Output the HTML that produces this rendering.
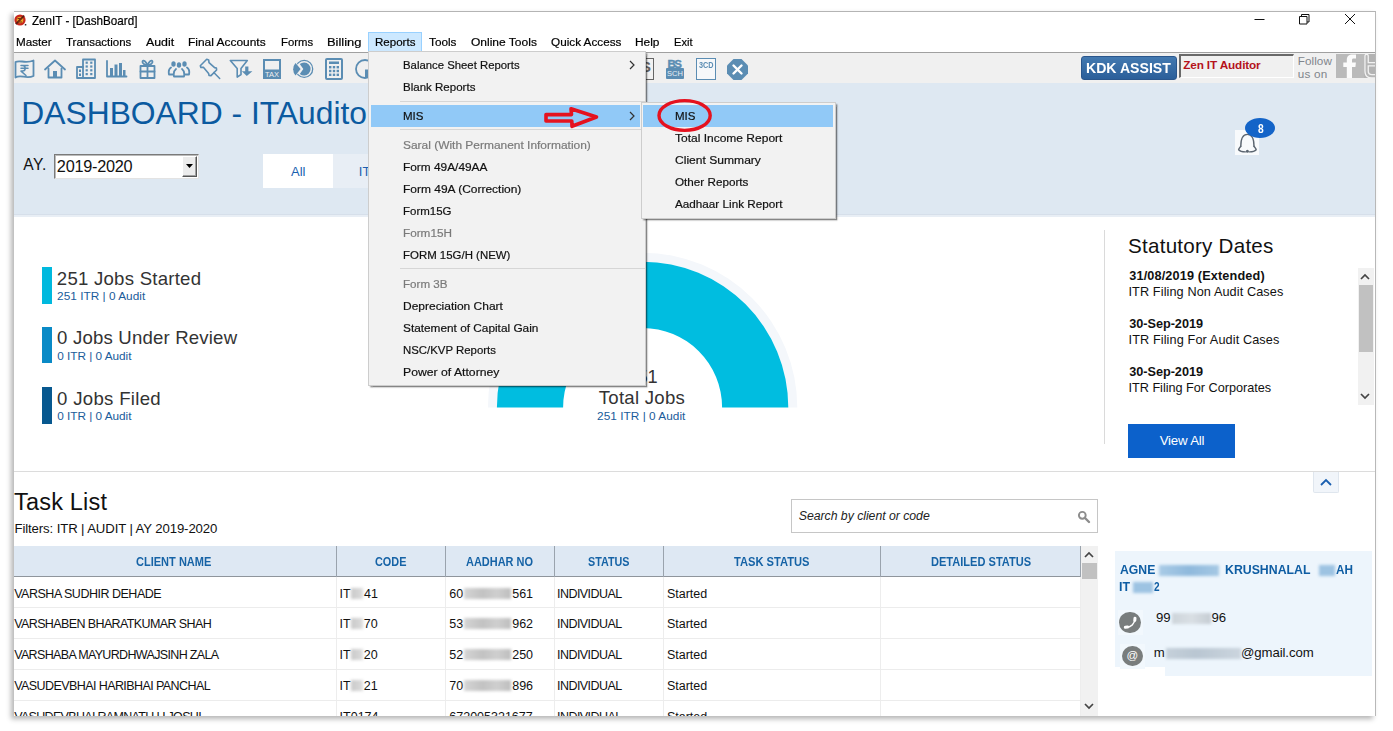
<!DOCTYPE html>
<html><head><meta charset="utf-8"><title>ZenIT - [DashBoard]</title>
<style>
*{box-sizing:border-box;margin:0;padding:0}
html,body{width:1393px;height:731px;overflow:hidden;background:#fff}
body{font-family:"Liberation Sans",Arial,sans-serif;color:#111;position:relative}
.a{position:absolute}
#win{position:absolute;left:13.6px;top:11px;width:1362.4px;height:705px;background:#fff;box-shadow:-3px 3px 5px rgba(0,0,0,.29);overflow:hidden}
#win:after{content:'';position:absolute;left:0;top:0;right:0;bottom:0;border-top:1px solid #b4b4b4;border-right:1px solid #b8b8b8;pointer-events:none}
#in{position:absolute;left:-13.6px;top:-11px;width:1393px;height:731px}
.t{position:absolute;white-space:nowrap;line-height:1}
.dd{position:absolute;background:#f2f2f2;border:1px solid #cdcdcd;box-shadow:1.500px 1.500px 1.500px rgba(0,0,0,.48)}
.blur{filter:blur(2px)}
</style></head><body>
<div id="win"><div id="in">
<div class="t" style="left:31.87px;top:15px;font-size:12.6px;color:#000;transform:scaleX(0.9260);transform-origin:0 0;-webkit-text-stroke:.2px;">ZenIT - [DashBoard]</div>
<svg class="a" style="left:14px;top:13px" width="13" height="14" viewBox="0 0 13 14" ><circle cx="6" cy="7" r="5.6" fill="#c8281c"/><circle cx="6" cy="7" r="3.3" fill="#e9a325"/><path d="M1.8 11.2 L10.2 2.600" stroke="#5a1a10" stroke-width="1.700"/><path d="M3.500 5.500h4l-3.500 3.500h4" stroke="#7a2a10" stroke-width="1" fill="none"/><rect x="10.800" y="11" width="1.500" height="1.500" fill="#333"/></svg>
<svg class="a" style="left:1250px;top:12px" width="115" height="16" viewBox="0 0 115 16" ><g stroke="#111" stroke-width="1" fill="none"><path d="M4.500 7.500h10"/><path d="M49.500 4.500h7.500v7.500h-7.500zM51.500 4.500v-2h7.500v7.500h-2"/><path d="M95 2l10 10M105 2l-10 10"/></g></svg>
<div class="a" style="left:368px;top:32px;width:54px;height:20.5px;background:#cce8ff;border:1px solid #99d1ff"></div>
<div class="t" style="left:15.55px;top:36px;font-size:11.7px;color:#000;transform:scaleX(0.9983);transform-origin:0 0;-webkit-text-stroke:.2px;">Master</div>
<div class="t" style="left:66.26px;top:36px;font-size:11.7px;color:#000;transform:scaleX(0.9828);transform-origin:0 0;-webkit-text-stroke:.2px;">Transactions</div>
<div class="t" style="left:146.4px;top:36px;font-size:11.7px;color:#000;transform:scaleX(1.0575);transform-origin:0 0;-webkit-text-stroke:.2px;">Audit</div>
<div class="t" style="left:188.34px;top:36px;font-size:11.7px;color:#000;transform:scaleX(1.0212);transform-origin:0 0;-webkit-text-stroke:.2px;">Final Accounts</div>
<div class="t" style="left:280.68px;top:36px;font-size:11.7px;color:#000;transform:scaleX(0.9684);transform-origin:0 0;-webkit-text-stroke:.2px;">Forms</div>
<div class="t" style="left:327.47px;top:36px;font-size:11.7px;color:#000;transform:scaleX(1.1054);transform-origin:0 0;-webkit-text-stroke:.2px;">Billing</div>
<div class="t" style="left:374.56px;top:36px;font-size:11.7px;color:#000;transform:scaleX(0.9885);transform-origin:0 0;-webkit-text-stroke:.2px;">Reports</div>
<div class="t" style="left:429.05px;top:36px;font-size:11.7px;color:#000;transform:scaleX(1.0068);transform-origin:0 0;-webkit-text-stroke:.2px;">Tools</div>
<div class="t" style="left:470.79px;top:36px;font-size:11.7px;color:#000;transform:scaleX(1.0284);transform-origin:0 0;-webkit-text-stroke:.2px;">Online Tools</div>
<div class="t" style="left:550.8px;top:36px;font-size:11.7px;color:#000;transform:scaleX(1.0039);transform-origin:0 0;-webkit-text-stroke:.2px;">Quick Access</div>
<div class="t" style="left:634.54px;top:36px;font-size:11.7px;color:#000;transform:scaleX(1.0182);transform-origin:0 0;-webkit-text-stroke:.2px;">Help</div>
<div class="t" style="left:673.59px;top:36px;font-size:11.7px;color:#000;transform:scaleX(0.9486);transform-origin:0 0;-webkit-text-stroke:.2px;">Exit</div>
<div class="a" style="left:13px;top:52px;width:1363px;height:31.5px;background:#f0f0f0;border-top:1px solid #a0a0a0"></div>
<svg class="a" style="left:14px;top:58px" width="21" height="22" viewBox="0 0 21 22" fill="none" stroke="#5b8db3" stroke-width="1.800" stroke-linejoin="round" stroke-linecap="round"><path d="M1.500 4 C6 1.500 11 6 19.500 2.500 V18 C12 21.500 7 16 1.500 19.500 Z"/><g stroke-width="1.500"><path d="M7 7.500h7M7 10.300h7M8.500 7.500c3.600 0 3.600 5.600 0 5.600H7l5 4.400"/></g></svg>
<svg class="a" style="left:43px;top:58px" width="24" height="22" viewBox="0 0 24 22" fill="none" stroke="#5b8db3" stroke-width="1.800" stroke-linejoin="round" stroke-linecap="round"><path d="M2 11.500 L12 2.500 L22 11.500"/><path d="M5.500 10.500V19.500H18.500V10.500"/><rect x="10" y="13" width="4" height="6.500" fill="#5b8db3" stroke="none"/></svg>
<svg class="a" style="left:75px;top:57px" width="22" height="23" viewBox="0 0 22 23" fill="none" stroke="#5b8db3" stroke-width="1.800" stroke-linejoin="round" stroke-linecap="round"><path d="M8 21V2.500H20V21Z"/><path d="M8 10H2V21H8"/><g fill="#5b8db3" stroke="none"><rect x="10.6" y="4.6" width="2.200" height="2.200"/><rect x="15.2" y="4.6" width="2.200" height="2.200"/><rect x="10.6" y="8.4" width="2.200" height="2.200"/><rect x="15.2" y="8.4" width="2.200" height="2.200"/><rect x="10.6" y="12.2" width="2.200" height="2.200"/><rect x="15.2" y="12.2" width="2.200" height="2.200"/><rect x="10.6" y="16" width="2.200" height="2.200"/><rect x="15.2" y="16" width="2.200" height="2.200"/><rect x="4" y="12.500" width="2" height="2.500"/><rect x="4" y="16.500" width="2" height="2.500"/></g></svg>
<svg class="a" style="left:105px;top:59px" width="23" height="20" viewBox="0 0 23 20" fill="none" stroke="#5b8db3" stroke-width="1.800" stroke-linejoin="round" stroke-linecap="round"><path d="M2 2V17.500H21.500"/><g fill="#5b8db3" stroke="none"><rect x="5" y="9" width="3" height="8"/><rect x="9.500" y="5.500" width="3" height="11.500"/><rect x="14" y="4" width="3" height="13"/><rect x="18" y="11" width="2.500" height="6"/></g></svg>
<svg class="a" style="left:138px;top:58px" width="19" height="22" viewBox="0 0 19 22" fill="none" stroke="#5b8db3" stroke-width="1.800" stroke-linejoin="round" stroke-linecap="round"><rect x="2.500" y="8" width="14" height="12"/><path d="M9.500 8V20M2.500 13.500H16.500"/><path d="M9.500 7.500C8 3 5 1.500 4.500 3.500S7 7 9.500 7.500C11 3 14 1.500 14.500 3.500S12 7 9.500 7.500"/></svg>
<svg class="a" style="left:167px;top:59px" width="24" height="20" viewBox="0 0 24 20" fill="none" stroke="#5b8db3" stroke-width="1.800" stroke-linejoin="round" stroke-linecap="round"><g fill="#5b8db3" stroke="none"><ellipse cx="6.500" cy="5" rx="2.200" ry="2.800"/><ellipse cx="12" cy="6" rx="2.200" ry="2.800"/><ellipse cx="17.500" cy="5" rx="2.200" ry="2.800"/></g><path d="M4 8.500C1.500 10 1.500 13 2 15.500H6.500M20 8.500C22.500 10 22.500 13 22 15.500H17.500M9 10C6.500 12 6.500 15 7 17.500H17C17.500 15 17.500 12 15 10"/></svg>
<svg class="a" style="left:199px;top:58px" width="22" height="22" viewBox="0 0 22 22" fill="none" stroke="#5b8db3" stroke-width="1.800" stroke-linejoin="round" stroke-linecap="round"><path d="M7.700 1.300 L1.300 7.700 L1.900 9.400 L4.600 9.400 L9.600 15.400 L10 17.400 L12 17.600 L17.600 12 L17.400 10 L15.600 9.600 L10 4.600 L9.700 2 Z" stroke-width="1.600"/><path d="M14.800 14.500L20.700 20.500" stroke-width="1.500"/></svg>
<svg class="a" style="left:229px;top:59px" width="25" height="20" viewBox="0 0 25 20" fill="none" stroke="#5b8db3" stroke-width="1.800" stroke-linejoin="round" stroke-linecap="round"><path d="M1.300 1.500 H18.300 L12 9.500 V15.500 L8.200 18.100 V9.500 Z" stroke-width="1.600"/><path d="M16.200 7.400h3.200v4.900h4L17.800 17 L12.800 12.300h3.400Z" fill="#5b8db3" stroke="none"/></svg>
<svg class="a" style="left:262px;top:58px" width="20" height="22" viewBox="0 0 20 22"><rect x="1" y="1" width="18" height="20" fill="#5b8db3"/><rect x="3" y="3" width="14" height="8.500" fill="#f0f0f0"/><text x="10" y="19.300" text-anchor="middle" font-family="Liberation Sans, sans-serif" font-size="7.500" fill="#f0f0f0" textLength="14" lengthAdjust="spacingAndGlyphs">TAX</text></svg>
<svg class="a" style="left:291px;top:58px" width="23" height="22" viewBox="0 0 23 22" fill="none" stroke="#5b8db3" stroke-width="1.800" stroke-linejoin="round" stroke-linecap="round"><circle cx="13.200" cy="10.900" r="8.500" stroke-width="1.300"/><path d="M10.800 11.100 L4 3.500 A10.500 10.500 0 0 0 4 18.700 Z" fill="#f0f0f0" stroke="none"/><path d="M12.300 11 L8.800 6.100 A6.500 6.500 0 1 1 8.800 15.900 Z" fill="#5b8db3" stroke="none"/><path d="M9.600 11.100 L4.500 5 A9.500 9.500 0 0 0 4.500 17.500 Z" fill="#5b8db3" stroke="none"/></svg>
<svg class="a" style="left:324px;top:57px" width="20" height="24" viewBox="0 0 20 24" fill="none" stroke="#5b8db3" stroke-width="1.800" stroke-linejoin="round" stroke-linecap="round"><rect x="2" y="2" width="16" height="20" rx="1" stroke-width="2"/><g fill="#5b8db3" stroke="none"><rect x="5" y="4.500" width="10" height="2.500"/><rect x="5" y="9" width="2.400" height="2.400"/><rect x="8.800" y="9" width="2.400" height="2.400"/><rect x="12.600" y="9" width="2.400" height="2.400"/><rect x="5" y="12.800" width="2.400" height="2.400"/><rect x="8.800" y="12.800" width="2.400" height="2.400"/><rect x="12.600" y="12.800" width="2.400" height="2.400"/><rect x="5" y="16.600" width="2.400" height="2.400"/><rect x="8.800" y="16.600" width="2.400" height="2.400"/><rect x="12.600" y="16.600" width="2.400" height="2.400"/></g></svg>
<svg class="a" style="left:354px;top:58px" width="22" height="22" viewBox="0 0 22 22" fill="none" stroke="#5b8db3" stroke-width="1.800" stroke-linejoin="round" stroke-linecap="round"><circle cx="11" cy="11" r="9"/><path d="M11 11.500H20A9 9 0 0 1 11 20Z" fill="#5b8db3" stroke="none"/></svg>
<div class="a" style="left:634px;top:58px;width:20px;height:22px;background:#f2f2f2;border:1px solid #666"></div>
<div class="t" style="left:641.25px;top:60px;font-size:14.5px;color:#606060;font-weight:bold;">S</div>
<div class="t" style="left:667.55px;top:59px;font-size:11.5px;color:#5b8db3;font-weight:bold;letter-spacing:-1.48px;-webkit-text-stroke:.4px #5b8db3;">BS</div>
<div class="a" style="left:666px;top:67.5px;width:18px;height:11.5px;background:#5b8db3;border-radius:1px"></div>
<div class="t" style="left:667.08px;top:70px;font-size:7.5px;color:#e8eef4;">SCH</div>
<div class="a" style="left:696.3px;top:57.8px;width:20px;height:22.2px;background:#f6f8fa;border:1.500px solid #5b8db3"></div>
<div class="t" style="left:699.15px;top:61px;font-size:9.3px;color:#5b8db3;font-weight:bold;transform:scaleX(0.7794);transform-origin:0 0;">3CD</div>
<svg class="a" style="left:726px;top:58px" width="23" height="23" viewBox="0 0 23 23" ><path d="M7.500 1H15.500L22 7.500V15.500L15.500 22H7.500L1 15.500V7.500Z" fill="#5b8db3"/><path d="M7.500 7.500L15.500 15.500M15.500 7.500L7.500 15.500" stroke="#fff" stroke-width="2.400" stroke-linecap="round"/></svg>
<div class="a" style="left:1081px;top:56.3px;width:95.5px;height:24px;background:linear-gradient(#4379b0,#2b5f9a);border-radius:3px;border:1px solid #2a568c"></div>
<div class="t" style="left:1085.6px;top:60px;font-size:15px;color:#fff;font-weight:bold;transform:scaleX(0.9392);transform-origin:0 0;">KDK ASSIST</div>
<div class="a" style="left:1178.8px;top:54px;width:115.5px;height:23.5px;background:#f0f0f0;border:1px solid #fff;border-top:2px solid #696969;border-left:2px solid #696969"></div>
<div class="t" style="left:1183.25px;top:60px;font-size:11.8px;color:#b5121b;font-weight:bold;letter-spacing:-0.16px;">Zen IT Auditor</div>
<div class="t" style="left:1297.85px;top:55px;font-size:11.7px;color:#80858c;letter-spacing:0.04px;">Follow</div>
<div class="t" style="left:1297.85px;top:68px;font-size:11.7px;color:#80858c;letter-spacing:0.22px;">us on</div>
<div class="a" style="left:1336px;top:54.2px;width:27.6px;height:23.6px;background:#bababa;"></div>
<div class="a" style="left:1363.6px;top:54.2px;width:12px;height:23.6px;background:#b3b3b3;"></div>
<svg class="a" style="left:1336px;top:54px" width="40" height="24" viewBox="1336 54 40 24" ><path d="M1346.800 78 V67.100 H1343.300 V62.600 H1346.800 V60 C1346.800 56 1349 54.400 1352.500 54.400 H1356 V58.600 H1353.800 C1352.400 58.600 1352 59.200 1352 60.400 V62.600 H1355.900 L1355.400 67.100 H1352 V78 Z" fill="#fbfbfb"/><path d="M1366.600 56 V71 C1366.600 74.500 1368.500 76.300 1372 76.300 H1377 M1366.600 64.200 H1377" fill="none" stroke="#f2f2f2" stroke-width="4.600" stroke-linecap="round" stroke-linejoin="round"/><path d="M1366.600 56 V71 C1366.600 74.500 1368.500 76.300 1372 76.300 H1377 M1366.600 64.200 H1377" fill="none" stroke="#b6b6b6" stroke-width="2" stroke-linecap="round" stroke-linejoin="round"/></svg>
<div class="a" style="left:13px;top:83.3px;width:1363px;height:131.2px;background:#dee8f2;"></div>
<div class="a" style="left:13px;top:214px;width:1363px;height:1px;background:#d6dfea;"></div>
<div class="a" style="left:13px;top:215px;width:1363px;height:2px;background:#e8eef5;"></div>
<div class="t" style="left:21.3px;top:98px;font-size:31.8px;color:#0b5aa0;">DASHBOARD - ITAuditor</div>
<div class="t" style="left:23.3px;top:157px;font-size:15.6px;color:#111;letter-spacing:0.51px;">AY.</div>
<div class="a" style="left:54px;top:154.3px;width:145px;height:24.7px;background:#fff;border:1px solid #7a7a7a;border-bottom-color:#e3e3e3;border-right-color:#e3e3e3;box-shadow:inset 1px 1px 0 #bbb"></div>
<div class="t" style="left:56.85px;top:158px;font-size:16.3px;color:#111;letter-spacing:-0.27px;">2019-2020</div>
<div class="a" style="left:181.5px;top:156px;width:15.5px;height:20.5px;background:#ececec;border:1px solid #fff;border-right-color:#555;border-bottom-color:#555;box-shadow:inset -1px -1px 0 #a0a0a0"></div>
<svg class="a" style="left:185.5px;top:164px" width="8" height="5" viewBox="0 0 8 5" ><path d="M0 0h7l-3.500 4z" fill="#000"/></svg>
<div class="a" style="left:263px;top:154px;width:70.3px;height:33.7px;background:#fff;"></div>
<div class="a" style="left:333.3px;top:154px;width:60px;height:33.7px;background:#e8eef5;"></div>
<div class="t" style="left:291px;top:165px;font-size:13px;color:#1a5fb0;letter-spacing:0.03px;">All</div>
<div class="t" style="left:358.8px;top:165px;font-size:13px;color:#1a5fb0;">ITR</div>
<div class="a" style="left:1234.7px;top:130.2px;width:24.2px;height:24.9px;background:#f8fafc;"></div>
<svg class="a" style="left:1237px;top:132px" width="21" height="22" viewBox="0 0 21 22" ><g fill="none" stroke="#5b6570" stroke-width="1.400" stroke-linecap="round"><path d="M3.800 14.300 C3.800 8 5.200 2.400 10.400 2.400 C15.600 2.400 17 8 17 14.300"/><path d="M3.800 14.300 C2.800 15.600 1.600 16.600 1.600 17.800 C3.200 19.600 7 19.900 8.300 19.900 M12.500 19.900 C14 19.900 17.600 19.600 19.200 17.800 C19.200 16.600 18 15.600 17 14.300"/></g><circle cx="10.400" cy="19.200" r="1.500" fill="#5b6570"/></svg>
<div class="a" style="left:1245px;top:117.7px;width:30.2px;height:20.1px;background:#1464c8;border-radius:50%"></div>
<div class="t" style="left:1258px;top:122px;font-size:13.4px;color:#fff;font-weight:bold;transform:scaleX(0.7649);transform-origin:0 0;">8</div>
<div class="a" style="left:41.8px;top:266.8px;width:9.9px;height:37px;background:#00b9de;"></div>
<div class="a" style="left:41.8px;top:326.9px;width:9.9px;height:36.5px;background:#0a8ac6;"></div>
<div class="a" style="left:41.8px;top:387.2px;width:9.9px;height:36.5px;background:#07588f;"></div>
<div class="t" style="left:56.85px;top:270px;font-size:18.6px;color:#333;letter-spacing:0.24px;">251 Jobs Started</div>
<div class="t" style="left:57.1px;top:291px;font-size:11.8px;color:#1a5c9a;letter-spacing:0.03px;">251 ITR | 0 Audit</div>
<div class="t" style="left:57.1px;top:329px;font-size:18.6px;color:#333;letter-spacing:0.18px;">0 Jobs Under Review</div>
<div class="t" style="left:57.35px;top:351px;font-size:11.8px;color:#1a5c9a;letter-spacing:-0.03px;">0 ITR | 0 Audit</div>
<div class="t" style="left:57.1px;top:390px;font-size:18.6px;color:#333;letter-spacing:0.3px;">0 Jobs Filed</div>
<div class="t" style="left:57.35px;top:411px;font-size:11.8px;color:#1a5c9a;letter-spacing:-0.03px;">0 ITR | 0 Audit</div>
<svg class="a" style="left:480px;top:250px" width="330" height="160" viewBox="480 250 330 160" ><path d="M487.90000000000003 407.4 A154.7 154.7 0 0 1 797.3 407.4 L788.3 407.4 A145.7 145.7 0 0 0 496.90000000000003 407.4 Z" fill="#f4f7fb"/><path d="M496.90000000000003 407.4 A145.7 145.7 0 0 1 788.3 407.4 L722.1 407.4 A79.5 79.5 0 0 0 563.1 407.4 Z" fill="#00bde0"/></svg>
<div class="t" style="left:627.32px;top:368px;font-size:18.2px;color:#333;">251</div>
<div class="t" style="left:598.75px;top:389px;font-size:18.6px;color:#333;letter-spacing:0.26px;">Total Jobs</div>
<div class="t" style="left:597.1px;top:411px;font-size:11.8px;color:#1a5c9a;letter-spacing:0.04px;">251 ITR | 0 Audit</div>
<div class="a" style="left:1104.3px;top:230px;width:1px;height:213.5px;background:#dadada;"></div>
<div class="t" style="left:1128.05px;top:236px;font-size:20.6px;color:#111;letter-spacing:0.24px;">Statutory Dates</div>
<div class="t" style="left:1129.25px;top:270px;font-size:12.7px;color:#111;font-weight:bold;letter-spacing:0.14px;">31/08/2019 (Extended)</div>
<div class="t" style="left:1128.5px;top:286px;font-size:12.7px;color:#111;letter-spacing:0.1px;">ITR Filing Non Audit Cases</div>
<div class="t" style="left:1129.25px;top:318px;font-size:12.7px;color:#111;font-weight:bold;letter-spacing:-0.03px;">30-Sep-2019</div>
<div class="t" style="left:1128.5px;top:334px;font-size:12.7px;color:#111;letter-spacing:0.11px;">ITR Filing For Audit Cases</div>
<div class="t" style="left:1129.25px;top:366px;font-size:12.7px;color:#111;font-weight:bold;letter-spacing:-0.03px;">30-Sep-2019</div>
<div class="t" style="left:1128.5px;top:382px;font-size:12.7px;color:#111;letter-spacing:-0.02px;">ITR Filing For Corporates</div>
<div class="a" style="left:1357.5px;top:267.7px;width:16.5px;height:137px;background:#f1f1f1;"></div>
<div class="a" style="left:1358.5px;top:285px;width:14.5px;height:67.3px;background:#c1c1c1;"></div>
<svg class="a" style="left:1360.4px;top:273px" width="10" height="7" viewBox="0 0 10 7" ><path d="M1 6l4-4 4 4" fill="none" stroke="#444" stroke-width="1.700"/></svg>
<svg class="a" style="left:1360.4px;top:393px" width="10" height="7" viewBox="0 0 10 7" ><path d="M1 1l4 4 4-4" fill="none" stroke="#444" stroke-width="1.700"/></svg>
<div class="a" style="left:1127.9px;top:423.9px;width:107.1px;height:34px;background:#0c61cb;"></div>
<div class="t" style="left:1159.7px;top:434px;font-size:13.3px;color:#fff;letter-spacing:-0.22px;">View All</div>
<div class="a" style="left:13px;top:471px;width:1363px;height:1px;background:#dcdcdc;"></div>
<div class="a" style="left:1312.6px;top:471.5px;width:26px;height:21px;background:#f1f5fa;border:1px solid #dfe6ee;border-top:none;border-radius:0 0 2px 2px"></div>
<svg class="a" style="left:1319.7px;top:477.5px" width="12" height="8" viewBox="0 0 12 8" ><path d="M1 7l5-5 5 5" fill="none" stroke="#1a5fb0" stroke-width="1.800"/></svg>
<div class="t" style="left:14px;top:491px;font-size:23.5px;color:#111;letter-spacing:0.2px;">Task List</div>
<div class="t" style="left:14.5px;top:522px;font-size:13.2px;color:#111;letter-spacing:-0.12px;">Filters: ITR | AUDIT | AY 2019-2020</div>
<div class="a" style="left:791.1px;top:499.1px;width:306.8px;height:33.7px;background:#fff;border:1px solid #c6c6c6"></div>
<div class="t" style="left:798.75px;top:510px;font-size:12.3px;color:#222;font-style:italic;letter-spacing:-0.04px;">Search by client or code</div>
<svg class="a" style="left:1076.5px;top:509.5px" width="14" height="14" viewBox="0 0 14 14" ><circle cx="5.300" cy="5.300" r="3.400" fill="none" stroke="#8d8d8d" stroke-width="1.900"/><path d="M8 8l4 4" stroke="#8d8d8d" stroke-width="2.400" stroke-linecap="round"/></svg>
<div class="a" style="left:13px;top:545.8px;width:1068px;height:31.2px;background:#dee8f3;border-bottom:1px solid #8f959c"></div>
<div class="t" style="left:136.45px;top:556px;font-size:12.4px;color:#1663a6;font-weight:bold;transform:scaleX(0.8899);transform-origin:0 0;">CLIENT NAME</div>
<div class="t" style="left:375.1px;top:556px;font-size:12.4px;color:#1663a6;font-weight:bold;transform:scaleX(0.8765);transform-origin:0 0;">CODE</div>
<div class="t" style="left:466.3px;top:556px;font-size:12.4px;color:#1663a6;font-weight:bold;transform:scaleX(0.8855);transform-origin:0 0;">AADHAR NO</div>
<div class="t" style="left:588.15px;top:556px;font-size:12.4px;color:#1663a6;font-weight:bold;transform:scaleX(0.8689);transform-origin:0 0;">STATUS</div>
<div class="t" style="left:734.1px;top:556px;font-size:12.4px;color:#1663a6;font-weight:bold;transform:scaleX(0.8995);transform-origin:0 0;">TASK STATUS</div>
<div class="t" style="left:930.55px;top:556px;font-size:12.4px;color:#1663a6;font-weight:bold;transform:scaleX(0.8923);transform-origin:0 0;">DETAILED STATUS</div>
<div class="a" style="left:335.8px;top:545.8px;width:1px;height:31.2px;background:#9aa3ad;"></div>
<div class="a" style="left:335.8px;top:577px;width:1px;height:140px;background:#ededed;"></div>
<div class="a" style="left:444.8px;top:545.8px;width:1px;height:31.2px;background:#9aa3ad;"></div>
<div class="a" style="left:444.8px;top:577px;width:1px;height:140px;background:#ededed;"></div>
<div class="a" style="left:553.9px;top:545.8px;width:1px;height:31.2px;background:#9aa3ad;"></div>
<div class="a" style="left:553.9px;top:577px;width:1px;height:140px;background:#ededed;"></div>
<div class="a" style="left:662.9px;top:545.8px;width:1px;height:31.2px;background:#9aa3ad;"></div>
<div class="a" style="left:662.9px;top:577px;width:1px;height:140px;background:#ededed;"></div>
<div class="a" style="left:879.9px;top:545.8px;width:1px;height:31.2px;background:#9aa3ad;"></div>
<div class="a" style="left:879.9px;top:577px;width:1px;height:140px;background:#ededed;"></div>
<div class="a" style="left:1080.4px;top:545.8px;width:1px;height:31.2px;background:#9aa3ad;"></div>
<div class="a" style="left:1080.4px;top:577px;width:1px;height:140px;background:#ededed;"></div>
<div class="a" style="left:13px;top:606.8px;width:1068px;height:1px;background:#ececec;"></div>
<div class="a" style="left:13px;top:637.9px;width:1068px;height:1px;background:#ececec;"></div>
<div class="a" style="left:13px;top:669px;width:1068px;height:1px;background:#ececec;"></div>
<div class="a" style="left:13px;top:700px;width:1068px;height:1px;background:#ececec;"></div>
<div class="t" style="left:14.2px;top:588px;font-size:12.5px;color:#111;letter-spacing:-0.49px;">VARSHA SUDHIR DEHADE</div>
<div class="t" style="left:339.6px;top:588px;font-size:12.5px;color:#111;">IT</div>
<div class="a" style="left:351px;top:587.5px;width:12px;height:11px;background:linear-gradient(90deg,#c9c9c9,#dcdcdc);filter:blur(1.500px)"></div>
<div class="t" style="left:363.95px;top:588px;font-size:12.5px;color:#111;">41</div>
<div class="t" style="left:449.3px;top:588px;font-size:12.5px;color:#111;">60</div>
<div class="a" style="left:464px;top:587.5px;width:47px;height:11px;background:linear-gradient(90deg,#d4d4d4,#c2c2c2 40%,#cfcfcf 70%,#bdbdbd);filter:blur(1.500px)"></div>
<div class="t" style="left:512.2px;top:588px;font-size:12.5px;color:#111;">561</div>
<div class="t" style="left:557.1px;top:588px;font-size:12.5px;color:#111;letter-spacing:-0.57px;">INDIVIDUAL</div>
<div class="t" style="left:666.9px;top:588px;font-size:12.5px;color:#111;">Started</div>
<div class="t" style="left:14.2px;top:618px;font-size:12.5px;color:#111;letter-spacing:-0.61px;">VARSHABEN BHARATKUMAR SHAH</div>
<div class="t" style="left:339.6px;top:618px;font-size:12.5px;color:#111;">IT</div>
<div class="a" style="left:351px;top:618.4px;width:12px;height:11px;background:linear-gradient(90deg,#c9c9c9,#dcdcdc);filter:blur(1.500px)"></div>
<div class="t" style="left:363.7px;top:618px;font-size:12.5px;color:#111;">70</div>
<div class="t" style="left:449.3px;top:618px;font-size:12.5px;color:#111;">53</div>
<div class="a" style="left:464px;top:618.4px;width:47px;height:11px;background:linear-gradient(90deg,#d4d4d4,#c2c2c2 40%,#cfcfcf 70%,#bdbdbd);filter:blur(1.500px)"></div>
<div class="t" style="left:512.2px;top:618px;font-size:12.5px;color:#111;">962</div>
<div class="t" style="left:557.1px;top:618px;font-size:12.5px;color:#111;letter-spacing:-0.57px;">INDIVIDUAL</div>
<div class="t" style="left:666.9px;top:618px;font-size:12.5px;color:#111;">Started</div>
<div class="t" style="left:14.2px;top:649px;font-size:12.5px;color:#111;letter-spacing:-0.66px;">VARSHABA MAYURDHWAJSINH ZALA</div>
<div class="t" style="left:339.6px;top:649px;font-size:12.5px;color:#111;">IT</div>
<div class="a" style="left:351px;top:649.4px;width:12px;height:11px;background:linear-gradient(90deg,#c9c9c9,#dcdcdc);filter:blur(1.500px)"></div>
<div class="t" style="left:363.7px;top:649px;font-size:12.5px;color:#111;">20</div>
<div class="t" style="left:449.3px;top:649px;font-size:12.5px;color:#111;">52</div>
<div class="a" style="left:464px;top:649.4px;width:47px;height:11px;background:linear-gradient(90deg,#d4d4d4,#c2c2c2 40%,#cfcfcf 70%,#bdbdbd);filter:blur(1.500px)"></div>
<div class="t" style="left:512.2px;top:649px;font-size:12.5px;color:#111;">250</div>
<div class="t" style="left:557.1px;top:649px;font-size:12.5px;color:#111;letter-spacing:-0.57px;">INDIVIDUAL</div>
<div class="t" style="left:666.9px;top:649px;font-size:12.5px;color:#111;">Started</div>
<div class="t" style="left:14.2px;top:680px;font-size:12.5px;color:#111;letter-spacing:-0.58px;">VASUDEVBHAI HARIBHAI PANCHAL</div>
<div class="t" style="left:339.6px;top:680px;font-size:12.5px;color:#111;">IT</div>
<div class="a" style="left:351px;top:680.1px;width:12px;height:11px;background:linear-gradient(90deg,#c9c9c9,#dcdcdc);filter:blur(1.500px)"></div>
<div class="t" style="left:363.7px;top:680px;font-size:12.5px;color:#111;">21</div>
<div class="t" style="left:449.3px;top:680px;font-size:12.5px;color:#111;">70</div>
<div class="a" style="left:464px;top:680.1px;width:47px;height:11px;background:linear-gradient(90deg,#d4d4d4,#c2c2c2 40%,#cfcfcf 70%,#bdbdbd);filter:blur(1.500px)"></div>
<div class="t" style="left:512.2px;top:680px;font-size:12.5px;color:#111;">896</div>
<div class="t" style="left:557.1px;top:680px;font-size:12.5px;color:#111;letter-spacing:-0.57px;">INDIVIDUAL</div>
<div class="t" style="left:666.9px;top:680px;font-size:12.5px;color:#111;">Started</div>
<div class="t" style="left:14.2px;top:711px;font-size:12.5px;color:#111;letter-spacing:-0.68px;">VASUDEVBHAI RAMNATH H JOSHI</div>
<div class="t" style="left:339.6px;top:711px;font-size:12.5px;color:#111;">IT0174</div>
<div class="t" style="left:449.3px;top:711px;font-size:12.5px;color:#111;">672005321677</div>
<div class="t" style="left:557.1px;top:711px;font-size:12.5px;color:#111;letter-spacing:-0.57px;">INDIVIDUAL</div>
<div class="t" style="left:666.9px;top:711px;font-size:12.5px;color:#111;">Started</div>
<div class="a" style="left:1081.4px;top:545.8px;width:16.5px;height:172px;background:#f1f1f1;"></div>
<div class="a" style="left:1082.4px;top:563.1px;width:14.6px;height:16.4px;background:#c1c1c1;"></div>
<svg class="a" style="left:1084.4px;top:551px" width="10" height="7" viewBox="0 0 10 7" ><path d="M1 6l4-4 4 4" fill="none" stroke="#444" stroke-width="1.700"/></svg>
<svg class="a" style="left:1084.4px;top:703px" width="10" height="7" viewBox="0 0 10 7" ><path d="M1 1l4 4 4-4" fill="none" stroke="#444" stroke-width="1.700"/></svg>
<div class="a" style="left:1114.6px;top:550.9px;width:257.7px;height:116.5px;background:#edf5fc;"></div>
<div class="a" style="left:1165px;top:660px;width:207.3px;height:16.1px;background:#edf5fc;"></div>
<div class="t" style="left:1119.77px;top:563px;font-size:13.4px;color:#0e5da3;font-weight:bold;transform:scaleX(0.9118);transform-origin:0 0;">AGNE</div>
<div class="t" style="left:1224.92px;top:563px;font-size:13.4px;color:#0e5da3;font-weight:bold;transform:scaleX(0.9188);transform-origin:0 0;">KRUSHNALAL</div>
<div class="t" style="left:1335.78px;top:563px;font-size:13.4px;color:#0e5da3;font-weight:bold;transform:scaleX(0.8783);transform-origin:0 0;">AH</div>
<div class="t" style="left:1119.31px;top:580px;font-size:13.4px;color:#0e5da3;font-weight:bold;transform:scaleX(0.9238);transform-origin:0 0;">IT</div>
<div class="t" style="left:1153.71px;top:580px;font-size:13.4px;color:#0e5da3;font-weight:bold;transform:scaleX(0.7515);transform-origin:0 0;">2</div>
<div class="a" style="left:1159px;top:565px;width:60px;height:11px;background:linear-gradient(90deg,#a9cbe6,#8fb9dc 50%,#a5c8e4);filter:blur(1.800px)"></div>
<div class="a" style="left:1318.5px;top:565px;width:16px;height:11px;background:#9dc3e2;filter:blur(1.800px)"></div>
<div class="a" style="left:1133px;top:581.5px;width:20px;height:11px;background:#9dc3e2;filter:blur(1.800px)"></div>
<div class="a" style="left:1117.5px;top:610px;width:25.5px;height:25px;background:#f2f8fd;"></div>
<div class="a" style="left:1119.2px;top:612px;width:21.5px;height:21.3px;background:#797d7d;border-radius:50%"></div>
<svg class="a" style="left:1119.2px;top:612px" width="22" height="22" viewBox="0 0 22 22" ><path d="M6.500 15.300c5.500 .3 9.300-3.500 9.500-9.300" fill="none" stroke="#fff" stroke-width="1.500" stroke-linecap="round"/><path d="M6.300 15.300l2.200-.2M16 6.200l-.2 2.200" fill="none" stroke="#fff" stroke-width="3" stroke-linecap="round"/></svg>
<div class="a" style="left:1119.5px;top:644px;width:25.5px;height:25px;background:#f2f8fd;"></div>
<div class="a" style="left:1121.8px;top:645.5px;width:21px;height:20.5px;background:#797d7d;border-radius:50%"></div>
<div class="t" style="left:1126.46px;top:650px;font-size:11.5px;color:#fff;">@</div>
<div class="t" style="left:1155.9px;top:611px;font-size:13.2px;color:#111;">99</div>
<div class="t" style="left:1211.5px;top:611px;font-size:13.2px;color:#111;">96</div>
<div class="a" style="left:1172px;top:613px;width:39px;height:11px;background:linear-gradient(90deg,#cdd4da,#d9dfe4 50%,#c5ccd3);filter:blur(1.800px)"></div>
<div class="t" style="left:1153.85px;top:646px;font-size:13.2px;color:#111;">m</div>
<div class="t" style="left:1241px;top:646px;font-size:13.2px;color:#111;letter-spacing:-0.09px;">@gmail.com</div>
<div class="a" style="left:1166px;top:648px;width:75px;height:11px;background:linear-gradient(90deg,#c5d0da,#b9c6d2 40%,#cbd5de);filter:blur(1.800px)"></div>
<div class="dd" style="left:368.300px;top:51.300px;width:277.500px;height:334.500px"></div>
<div class="a" style="left:371.3px;top:105px;width:268.7px;height:22px;background:#91c9f7;"></div>
<div class="a" style="left:400px;top:100.7px;width:244.5px;height:1px;background:#d6d6d6;"></div>
<div class="a" style="left:400px;top:129.4px;width:244.5px;height:1px;background:#d6d6d6;"></div>
<div class="a" style="left:400px;top:268.4px;width:244.5px;height:1px;background:#d6d6d6;"></div>
<div class="t" style="left:403px;top:59px;font-size:11.7px;color:#111;transform:scaleX(0.9707);transform-origin:0 0;-webkit-text-stroke:.2px;">Balance Sheet Reports</div>
<div class="t" style="left:403px;top:81px;font-size:11.7px;color:#111;transform:scaleX(0.9866);transform-origin:0 0;-webkit-text-stroke:.2px;">Blank Reports</div>
<div class="t" style="left:403px;top:110px;font-size:11.7px;color:#111;transform:scaleX(0.9855);transform-origin:0 0;-webkit-text-stroke:.2px;">MIS</div>
<div class="t" style="left:403px;top:139px;font-size:11.7px;color:#7a7a7a;transform:scaleX(1.0216);transform-origin:0 0;-webkit-text-stroke:.2px;">Saral (With Permanent Information)</div>
<div class="t" style="left:403px;top:161px;font-size:11.7px;color:#111;transform:scaleX(1.0152);transform-origin:0 0;-webkit-text-stroke:.2px;">Form 49A/49AA</div>
<div class="t" style="left:403px;top:183px;font-size:11.7px;color:#111;transform:scaleX(1.0238);transform-origin:0 0;-webkit-text-stroke:.2px;">Form 49A (Correction)</div>
<div class="t" style="left:403px;top:205px;font-size:11.7px;color:#111;transform:scaleX(0.9815);transform-origin:0 0;-webkit-text-stroke:.2px;">Form15G</div>
<div class="t" style="left:403px;top:227px;font-size:11.7px;color:#7a7a7a;transform:scaleX(1.0049);transform-origin:0 0;-webkit-text-stroke:.2px;">Form15H</div>
<div class="t" style="left:403px;top:249px;font-size:11.7px;color:#111;transform:scaleX(0.9786);transform-origin:0 0;-webkit-text-stroke:.2px;">FORM 15G/H (NEW)</div>
<div class="t" style="left:403px;top:278px;font-size:11.7px;color:#7a7a7a;transform:scaleX(0.9920);transform-origin:0 0;-webkit-text-stroke:.2px;">Form 3B</div>
<div class="t" style="left:403px;top:300px;font-size:11.7px;color:#111;transform:scaleX(1.0251);transform-origin:0 0;-webkit-text-stroke:.2px;">Depreciation Chart</div>
<div class="t" style="left:403px;top:322px;font-size:11.7px;color:#111;transform:scaleX(1.0113);transform-origin:0 0;-webkit-text-stroke:.2px;">Statement of Capital Gain</div>
<div class="t" style="left:403px;top:344px;font-size:11.7px;color:#111;transform:scaleX(0.9752);transform-origin:0 0;-webkit-text-stroke:.2px;">NSC/KVP Reports</div>
<div class="t" style="left:403px;top:366px;font-size:11.7px;color:#111;transform:scaleX(1.0449);transform-origin:0 0;-webkit-text-stroke:.2px;">Power of Attorney</div>
<svg class="a" style="left:628.5px;top:59.5px" width="7" height="10" viewBox="0 0 7 10" ><path d="M1 1l4 4-4 4" fill="none" stroke="#333" stroke-width="1.200"/></svg>
<svg class="a" style="left:628.5px;top:110.5px" width="7" height="10" viewBox="0 0 7 10" ><path d="M1 1l4 4-4 4" fill="none" stroke="#333" stroke-width="1.200"/></svg>
<div class="dd" style="left:640.800px;top:101.500px;width:195.500px;height:117px"></div>
<div class="a" style="left:643.3px;top:105px;width:190px;height:22px;background:#91c9f7;"></div>
<div class="t" style="left:674.8px;top:110px;font-size:11.7px;color:#111;transform:scaleX(0.9855);transform-origin:0 0;-webkit-text-stroke:.2px;">MIS</div>
<div class="t" style="left:674.8px;top:132px;font-size:11.7px;color:#111;transform:scaleX(1.0267);transform-origin:0 0;-webkit-text-stroke:.2px;">Total Income Report</div>
<div class="t" style="left:674.8px;top:154px;font-size:11.7px;color:#111;transform:scaleX(1.0334);transform-origin:0 0;-webkit-text-stroke:.2px;">Client Summary</div>
<div class="t" style="left:674.8px;top:176px;font-size:11.7px;color:#111;transform:scaleX(1.0002);transform-origin:0 0;-webkit-text-stroke:.2px;">Other Reports</div>
<div class="t" style="left:674.8px;top:198px;font-size:11.7px;color:#111;transform:scaleX(1.0017);transform-origin:0 0;-webkit-text-stroke:.2px;">Aadhaar Link Report</div>
<svg class="a" style="left:540px;top:95px" width="180" height="40" viewBox="540 95 180 40" ><path d="M546 114.600 H571.500 L571 108.800 L596.500 117 L572 126.300 L571.800 121 H546 Z" fill="none" stroke="#e5121f" stroke-width="3.600" stroke-linejoin="round"/><ellipse cx="684.600" cy="115.500" rx="25.600" ry="14.900" fill="none" stroke="#e5121f" stroke-width="3.400"/></svg>
</div></div>
</body></html>
